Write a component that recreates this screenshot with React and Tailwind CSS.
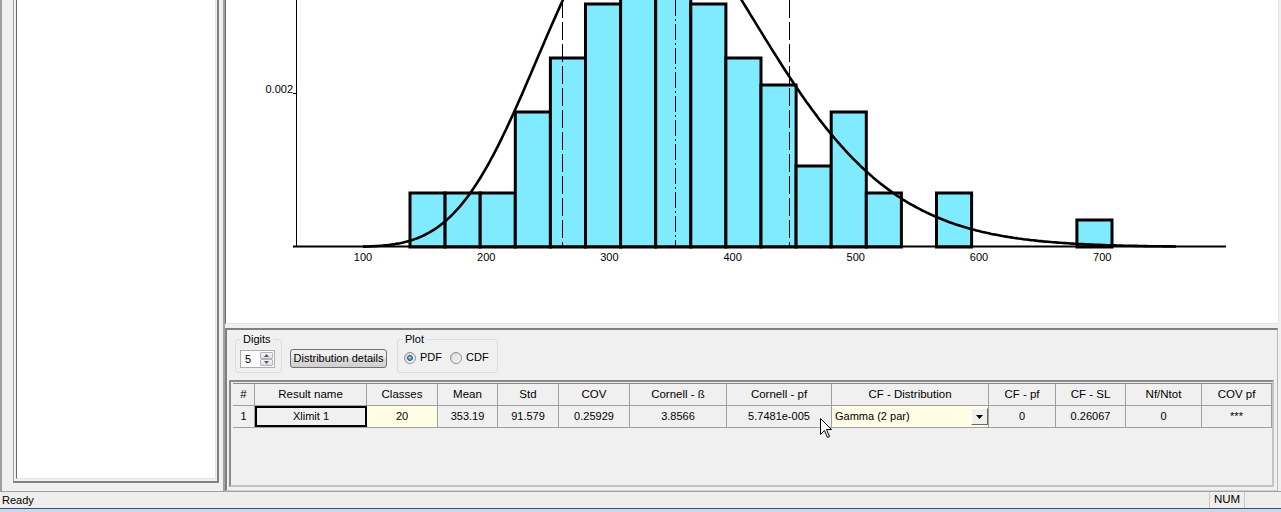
import React from 'react';

const MEAN = 353.19;
const STD = 91.579;
const K = (MEAN / STD) * (MEAN / STD);
const TH = (STD * STD) / MEAN;
function unnorm(v) {
  return Math.exp((K - 1) * Math.log(v) - v / TH);
}
let Z = 0;
for (let v = 0.5; v < 2000; v += 1) Z += unnorm(v);
const pdf = (v) => unnorm(v) / Z;
const X = (v) => 363 + (v - 100) * 1.232;
const Y = (d) => 247 - d * 77000;

const counts = [2, 2, 2, 5, 7, 9, 12, 12, 9, 7, 6, 3, 5, 2, 0, 2, 0, 0, 0, 1];
const BW = 35.1;
const X0 = 410;

function curvePath() {
  const pts = [];
  for (let v = 100; v <= 760; v += 2) {
    pts.push(`${X(v).toFixed(1)},${Math.max(-20, Y(pdf(v))).toFixed(1)}`);
  }
  return 'M' + pts.join(' L');
}

function Chart() {
  return (
    <svg width="1052" height="323" className="block">
      <g transform="translate(-226 0)">
        {counts.map((c, i) =>
          c > 0 ? (
            <rect
              key={i}
              x={X0 + i * BW}
              y={247 - 27 * c}
              width={BW}
              height={27 * c}
              fill="#80eaff"
              stroke="#000"
              strokeWidth="3"
            />
          ) : null
        )}
        <line x1="562.5" y1="0" x2="562.5" y2="246" stroke="#000" strokeWidth="1" strokeDasharray="18 4" />
        <line x1="789.5" y1="0" x2="789.5" y2="246" stroke="#000" strokeWidth="1" strokeDasharray="18 4" />
        <line x1="675.5" y1="0" x2="675.5" y2="246" stroke="#000" strokeWidth="1" strokeDasharray="16 3 2 3" />
        <path d={curvePath()} fill="none" stroke="#000" strokeWidth="2.6" strokeLinejoin="round" />
        <line x1="296.5" y1="0" x2="296.5" y2="247" stroke="#000" strokeWidth="1" />
        <line x1="293" y1="93.5" x2="297" y2="93.5" stroke="#000" strokeWidth="1" />
        <line x1="293" y1="246.5" x2="1226" y2="246.5" stroke="#000" strokeWidth="2" />
        <text x="293" y="93" textAnchor="end" fontSize="11" fontFamily="Liberation Sans, Arial, sans-serif" fill="#000">
          0.002
        </text>
        {[100, 200, 300, 400, 500, 600, 700].map((v) => (
          <text
            key={v}
            x={X(v)}
            y="261"
            textAnchor="middle"
            fontSize="11"
            fontFamily="Liberation Sans, Arial, sans-serif"
            fill="#000"
          >
            {v}
          </text>
        ))}
      </g>
    </svg>
  );
}

function LeftPane() {
  return (
    <div className="w-[223px] shrink-0 border-l-2 border-l-[#a0a0a0] pl-[11px] pr-[4px] pb-[8px] flex flex-col">
      <div className="flex-1 border-l border-l-[#a0a0a0] border-r-2 border-r-[#808080] border-b-2 border-b-[#808080] pl-[2px] pr-[1px] pb-[2px]">
        <div className="h-full bg-white border-l border-l-[#696969] border-r border-r-[#e3e3e3] border-b border-b-[#e3e3e3]" />
      </div>
    </div>
  );
}

function Spinner() {
  return (
    <div className="mt-[4px] ml-[4px] w-[35px] h-[18px] bg-white border border-[#abadb3] flex items-stretch">
      <div className="flex-1 text-[11px] leading-[16px] pl-[4px]">5</div>
      <div className="w-[15px] flex flex-col p-[1px] gap-0">
        <div className="flex-1 border border-[#b5b5b5] rounded-[1px] bg-[linear-gradient(#f6f6f6,#dedede)] flex items-center justify-center">
          <svg width="5" height="3" viewBox="0 0 5 3">
            <path d="M0 3 L2.5 0 L5 3 Z" fill="#4a5a78" />
          </svg>
        </div>
        <div className="flex-1 border border-[#b5b5b5] rounded-[1px] bg-[linear-gradient(#f6f6f6,#dedede)] flex items-center justify-center">
          <svg width="5" height="3" viewBox="0 0 5 3">
            <path d="M0 0 L2.5 3 L5 0 Z" fill="#4a5a78" />
          </svg>
        </div>
      </div>
    </div>
  );
}

function Radio({ checked, label, first }) {
  return (
    <div className={`flex items-center ${first ? 'ml-[6px]' : 'ml-[8px]'}`}>
      <div className="w-[12px] h-[12px] rounded-full border border-[#8e8f8f] bg-[linear-gradient(135deg,#cfcfcf,#ffffff)] flex items-center justify-center">
        {checked ? (
          <div className="w-[6px] h-[6px] rounded-full bg-[radial-gradient(circle_at_40%_35%,#9fe3ff,#1a6fb0)] border border-[#1d4f7a]" />
        ) : (
          <div className="w-[6px] h-[6px] rounded-full bg-[#e8e8e8]" />
        )}
      </div>
      <span className="ml-[4px] text-[11px] leading-[13px]">{label}</span>
    </div>
  );
}

const GRID =
  'grid grid-cols-[22px_112px_71px_60px_61px_71px_97px_105px_157px_67px_70px_76px_70px]';

const headers = [
  '#',
  'Result name',
  'Classes',
  'Mean',
  'Std',
  'COV',
  'Cornell - ß',
  'Cornell - pf',
  'CF - Distribution',
  'CF - pf',
  'CF - SL',
  'Nf/Ntot',
  'COV pf',
];

function Table() {
  const cell = 'flex items-center justify-center border-r border-r-[#a0a0a0] text-[11px] whitespace-nowrap';
  return (
    <div className="mt-[7px] w-[1045px] h-[107px] border-2 border-t-[#8a8a8a] border-l-[#8a8a8a] border-r-[#c4c4c4] border-b-[#c4c4c4] pl-[2px] pt-[1px]">
      <div className={`${GRID} h-[23px] border-t border-t-[#8a8a8a] border-b border-b-[#a0a0a0]`}>
        {headers.map((h) => (
          <div key={h} className="flex items-center justify-center border-r border-r-[#a0a0a0] text-[11.5px] whitespace-nowrap">
            {h}
          </div>
        ))}
      </div>
      <div className={`${GRID} h-[22px] border-b border-b-[#a0a0a0]`}>
        <div className={cell}>1</div>
        <div className="flex items-center justify-center border-2 border-black text-[11px]">Xlimit 1</div>
        <div className={`${cell} bg-[#fffde6]`}>20</div>
        <div className={cell}>353.19</div>
        <div className={cell}>91.579</div>
        <div className={cell}>0.25929</div>
        <div className={cell}>3.8566</div>
        <div className={cell}>5.7481e-005</div>
        <div className="flex items-center border-r border-r-[#a0a0a0] bg-[#fffde6] text-[11px] pl-[3px]">
          <span className="flex-1">Gamma (2 par)</span>
          <div className="w-[17px] h-[17px] border border-t-white border-l-white border-b-[#696969] border-r-[#696969] bg-[#f0f0f0] flex items-center justify-center">
            <svg width="7" height="4" viewBox="0 0 7 4">
              <path d="M0 0 L7 0 L3.5 4 Z" fill="#000" />
            </svg>
          </div>
        </div>
        <div className={cell}>0</div>
        <div className={cell}>0.26067</div>
        <div className={cell}>0</div>
        <div className={cell}>***</div>
      </div>
    </div>
  );
}

function BottomPanel() {
  return (
    <div className="mt-[4px] h-[163px] mr-[3px] border-l-2 border-l-[#808080] border-t-2 border-t-[#808080] border-r border-r-[#b8b8b8] border-b border-b-[#d0d0d0] pl-[2px] pr-[3px] flex flex-col">
      <div className="flex items-start pt-[3px] pl-[6px]">
        <fieldset className="w-[47px] h-[40px] border border-[#d5dfe5] rounded-[3px] block">
          <legend className="ml-[5px] px-[2px] text-[11px] leading-[13px]">Digits</legend>
          <Spinner />
        </fieldset>
        <button className="ml-[8px] mt-[16px] w-[97px] h-[19px] border border-[#707070] rounded-[3px] bg-[linear-gradient(#f2f2f2,#ebebeb_45%,#dddddd_50%,#cfcfcf)] text-[11px] leading-[17px] text-black">
          Distribution details
        </button>
        <fieldset className="ml-[10px] w-[101px] h-[40px] border border-[#d5dfe5] rounded-[3px] block">
          <legend className="ml-[5px] px-[2px] text-[11px] leading-[13px]">Plot</legend>
          <div className="mt-[5px] flex items-center">
            <Radio checked label="PDF" first />
            <Radio label="CDF" />
          </div>
        </fieldset>
      </div>
      <Table />
    </div>
  );
}

function StatusBar() {
  return (
    <div className="h-[21px] flex flex-col border-t border-t-[#a0a0a0]">
      <div className="h-[16px] bg-[#f0eeec] flex items-stretch">
        <span className="pl-[2px] text-[11px] leading-[16px]">Ready</span>
        <div className="ml-auto mr-[36px] w-[36px] border-l border-r border-[#c8c8c8] flex items-center justify-center text-[11.5px]">
          NUM
        </div>
      </div>
      <div className="h-[1px] bg-[#3d4e66]" />
      <div className="h-[3px] bg-[#c9d9ec]" />
    </div>
  );
}

function Cursor() {
  return (
    <svg className="absolute left-[820px] top-[418px]" width="13" height="21" viewBox="0 0 13 21">
      <path
        d="M0.5 0.5 L0.5 16.5 L4.5 12.5 L7.5 19.5 L9.5 18.5 L6.5 11.5 L11.5 11.5 Z"
        fill="#fff"
        stroke="#000"
        strokeWidth="1"
        strokeLinejoin="miter"
      />
    </svg>
  );
}

export default function App() {
  return (
    <div className="w-[1281px] h-[512px] overflow-hidden bg-[#f0f0f0] flex flex-col relative font-['Liberation_Sans',Arial,sans-serif] text-black select-none">
      <div className="flex h-[491px]">
        <LeftPane />
        <div className="flex-1 min-w-0 flex flex-col border-l-2 border-l-[#a0a0a0]">
          <div className="h-[324px] mr-[2px] border-l border-l-[#696969] border-r border-r-[#e3e3e3] border-b border-b-[#e3e3e3] bg-white overflow-hidden">
            <Chart />
          </div>
          <BottomPanel />
        </div>
      </div>
      <StatusBar />
      <Cursor />
    </div>
  );
}
